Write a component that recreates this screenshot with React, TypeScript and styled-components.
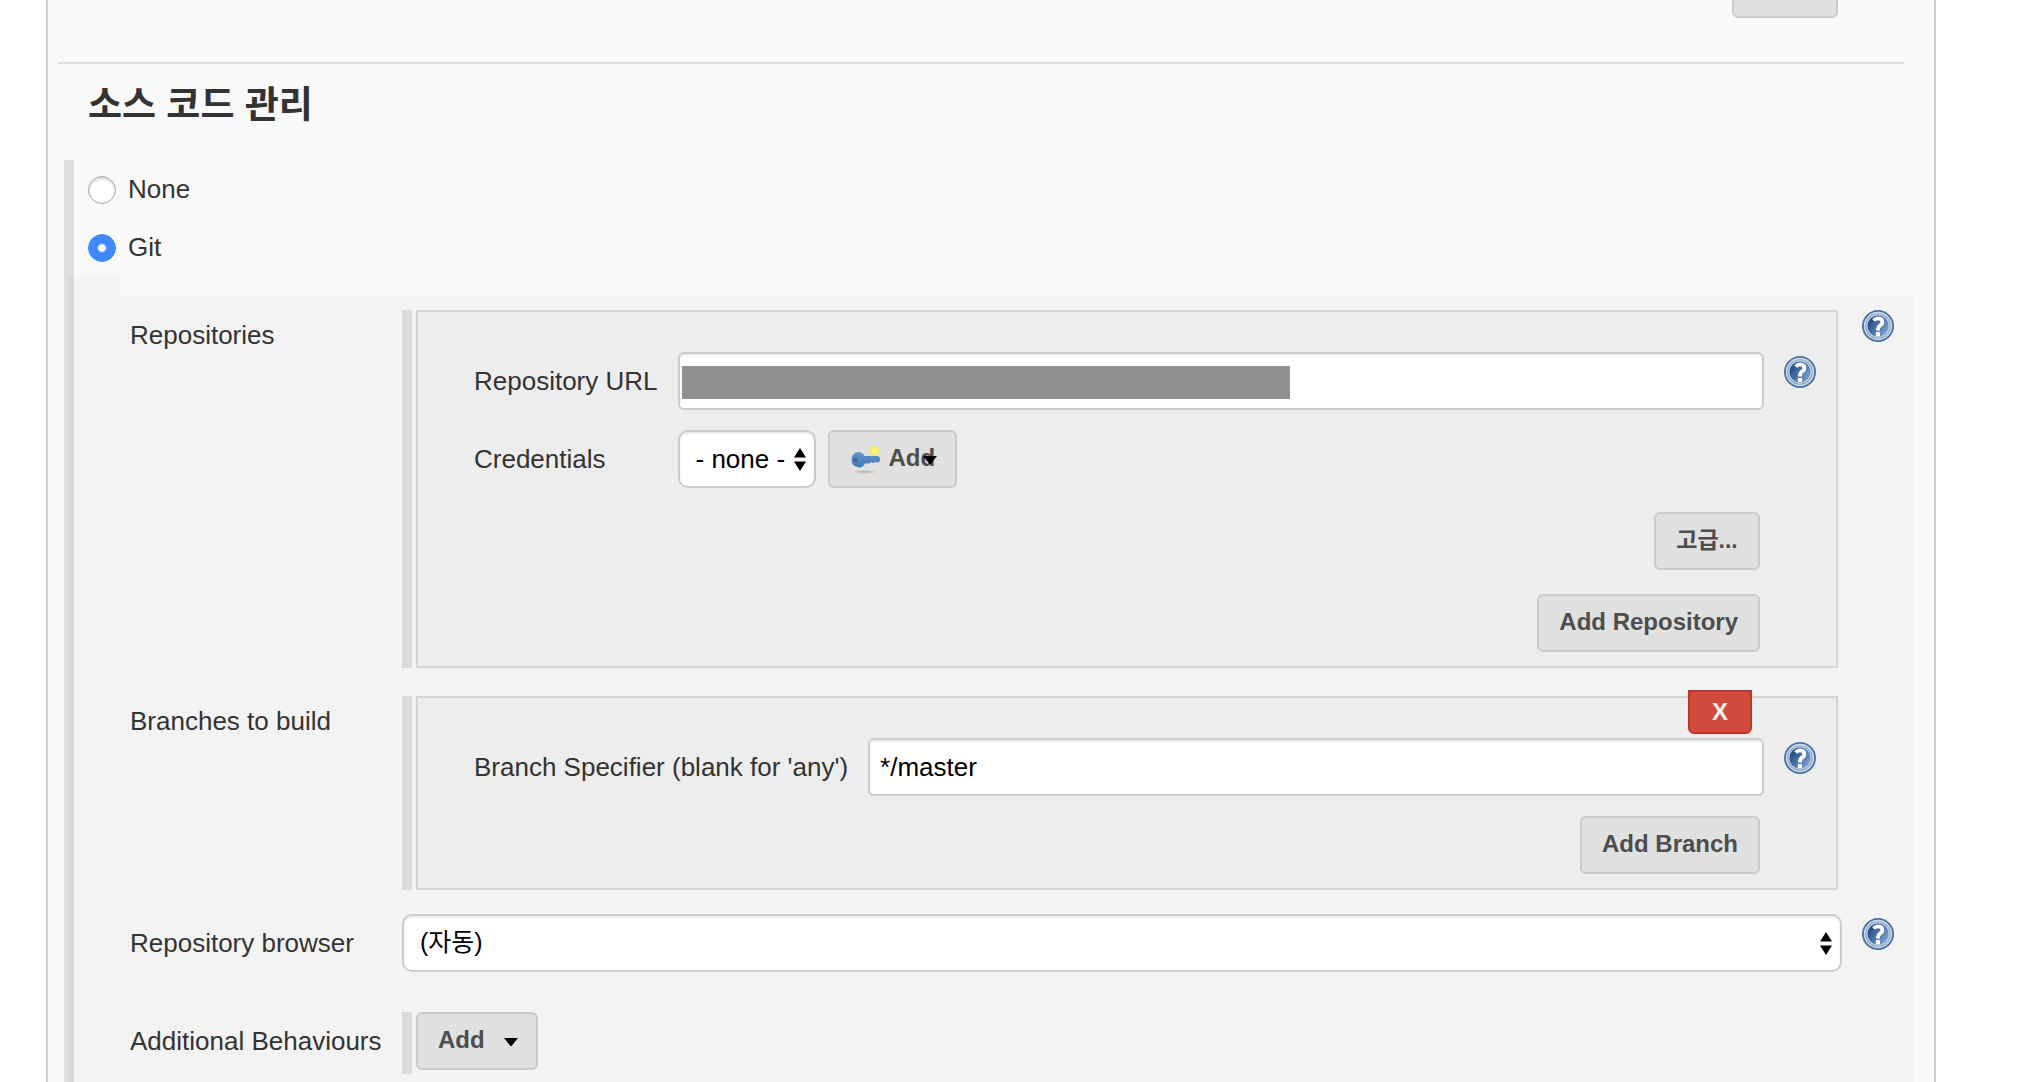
import React, { useId, useState } from "react";
import styled, { createGlobalStyle } from "styled-components";

const GlobalStyle = createGlobalStyle`
  *, *::before, *::after { box-sizing: border-box; }
  body {
    margin: 0;
    background: #fff;
    color: #333;
    font: 26px/30px "Liberation Sans", "Noto Sans CJK KR", sans-serif;
  }
  button, input, select { font-family: inherit; margin: 0; }
`;

const Page = styled.div`
  display: flex;
  flex-direction: column;
  min-height: 100vh;
  padding: 0 84px 0 46px;
`;

const Panel = styled.main`
  flex: 1;
  display: flex;
  flex-direction: column;
  background: #f9f9f9;
  border: solid #ccc;
  border-width: 0 2px;
`;

const PreviousRow = styled.div`
  display: flex;
  justify-content: flex-end;
  align-items: flex-end;
  height: 18px;
  padding-right: 96px;
  overflow: hidden;
`;

const Divider = styled.hr`
  width: auto;
  height: 2px;
  margin: 44px 30px 0 10px;
  border: 0;
  background: #dedede;
`;

const Heading = styled.h1`
  margin: 0 0 16px;
  padding: 4px 0 0 40px;
  font-size: 37px;
  line-height: 76px;
  font-weight: 700;
`;

const ScmChoices = styled.section`
  flex: 1;
  display: flex;
  flex-direction: column;
  margin: 0 20px 0 16px;
  border-left: 10px solid rgba(0, 0, 0, 0.1);
`;

const RadioRow = styled.label`
  display: flex;
  align-items: center;
  gap: 12px;
  height: 58px;
  padding: 2px 0 0 14px;

  span { padding-bottom: 2px; }
`;

const Radio = styled.input`
  appearance: none;
  width: 28px;
  height: 28px;
  margin: 0;
  border-radius: 50%;
  border: 1px solid #a9a9a9;
  background: #fff;
  box-shadow: inset 0 2px 3px rgba(0, 0, 0, 0.18);

  &:checked {
    border-color: #3f8afa;
    background: radial-gradient(circle, #fff 0 3px, #3f8afa 5px);
    box-shadow: none;
  }
`;

const GitTab = styled.div`
  width: 52px;
  height: 20px;
  margin-left: -6px;
  background: rgba(0, 0, 0, 0.025);
`;

const GitSettings = styled.div`
  flex: 1;
  margin-left: -6px;
  padding: 14px 20px 8px 62px;
  background: rgba(0, 0, 0, 0.025);
`;

const SettingRow = styled.div<{ $gap?: number }>`
  display: grid;
  grid-template-columns: 272px minmax(0, 1fr) 32px;
  align-items: start;
  margin-top: ${(p) => p.$gap ?? 0}px;
`;

const SettingLabel = styled.label<{ $inline?: boolean }>`
  padding-top: ${(p) => (p.$inline ? 14 : 10)}px;
  white-space: nowrap;
`;

const SettingContent = styled.div`
  margin-right: 20px;
`;

const Repeatable = styled.div`
  display: flex;
  gap: 4px;
  padding-right: 4px;

  &::before {
    content: "";
    flex: none;
    width: 10px;
    background: rgba(0, 0, 0, 0.1);
  }
`;

const Box = styled.div`
  position: relative;
  flex: 1;
  min-width: 0;
  padding: 40px 20px 14px 56px;
  border: 2px solid #d4d4d4;
  background: rgba(0, 0, 0, 0.025);
`;

const Fields = styled.div`
  display: grid;
  grid-template-columns: auto minmax(0, 1fr) 32px;
  gap: 20px;
  align-items: center;
`;

const FieldLabel = styled.label`
  white-space: nowrap;
`;

const Actions = styled.div<{ $gap: number }>`
  display: flex;
  flex-direction: column;
  align-items: flex-end;
  gap: 24px;
  margin-top: ${(p) => p.$gap}px;
  padding-right: 56px;
`;

const FieldBox = styled.div`
  position: relative;
`;

const TextInput = styled.input`
  display: block;
  width: 100%;
  height: 58px;
  padding: 0 10px;
  border: 2px solid #ccc;
  border-radius: 6px;
  background: #fff;
  box-shadow: inset 0 2px 2px rgba(0, 0, 0, 0.075);
  color: #000;
  font-size: 26px;
`;

const Redaction = styled.div`
  position: absolute;
  top: 14px;
  left: 4px;
  width: 56%;
  height: 33px;
  background: #909090;
`;

const SelectBox = styled.div`
  position: relative;

  svg {
    position: absolute;
    top: 18px;
    right: 10px;
    pointer-events: none;
  }
`;

const SelectInput = styled.select<{ $wide?: boolean }>`
  appearance: none;
  display: block;
  width: ${(p) => (p.$wide ? "100%" : "auto")};
  height: 58px;
  padding: 0 28px ${(p) => (p.$wide ? 2 : 0)}px 16px;
  border: 2px solid #ccc;
  border-radius: 10px;
  background: #fff;
  box-shadow: inset 0 2px 2px rgba(0, 0, 0, 0.075);
  color: #000;
  font-size: ${(p) => (p.$wide ? 25 : 26)}px;
`;

const Inline = styled.div`
  display: flex;
  gap: 12px;
`;

const Button = styled.button`
  height: 58px;
  min-width: 106px;
  padding: 0 20px 2px;
  border: 2px solid #cacaca;
  border-radius: 6px;
  background: #e0e0e0;
  color: #4d4d4d;
  font-size: 24px;
  font-weight: 700;
  line-height: 28px;
  white-space: nowrap;

  &:lang(ko) { font-size: 23px; }
`;

const MenuButton = styled(Button)<{ $icon?: boolean }>`
  position: relative;
  display: flex;
  align-items: center;
  gap: 7px;
  padding-right: ${(p) => (p.$icon ? 20 : 51)}px;
`;

const Caret = styled.svg`
  position: absolute;
  top: 24px;
  right: 18px;
`;

const KeyImage = styled.svg`
  flex: none;
`;

const AddBehaviour = styled.div`
  padding-bottom: 4px;
`;

const DeleteButton = styled.button`
  position: absolute;
  top: -8px;
  right: 84px;
  width: 64px;
  height: 44px;
  padding: 0;
  border: 2px solid #bd362b;
  border-radius: 0 0 6px 6px;
  background: #d24a3c;
  color: #f2f2f2;
  font-size: 24px;
  font-weight: 700;
  line-height: 28px;
`;

const HelpButton = styled.button<{ $drop?: boolean }>`
  align-self: start;
  width: 32px;
  height: 32px;
  margin-top: ${(p) => (p.$drop ? 4 : 0)}px;
  padding: 0;
  border: 0;
  background: none;

  svg { display: block; }
`;

function Help({ topic, drop }: { topic: string; drop?: boolean }) {
  const id = useId();
  return (
    <HelpButton type="button" aria-label={`Help: ${topic}`} $drop={drop}>
      <svg width="32" height="32" viewBox="0 0 32 32">
        <defs>
          <linearGradient id={id} x1="0" y1="0.2" x2="1" y2="0.9">
            <stop offset="0.1" stopColor="#234c8a" />
            <stop offset="1" stopColor="#86abd4" />
          </linearGradient>
        </defs>
        <circle cx="16" cy="16" r="16" fill="#4a6fa6" />
        <circle cx="16" cy="16" r="13.4" fill="#7391bd" stroke="#ccd8e8" strokeWidth="1.6" />
        <circle cx="16" cy="16" r="11.2" fill={`url(#${id})`} stroke="#b9cae0" strokeWidth="1.4" />
        <path
          d="M11.8 10.6 Q13.4 8.4 16.2 8.4 Q20.4 8.6 20.4 12 Q20.4 14 18 15.600 Q15.900 17.200 15.900 20.400"
          fill="none"
          stroke="#fff"
          strokeWidth="3.8"
        />
        <rect x="13.800" y="22" width="4.200" height="4.200" rx="1" fill="#fff" />
      </svg>
    </HelpButton>
  );
}

function SelectArrows() {
  return (
    <svg width="12" height="24" viewBox="0 0 12 24" aria-hidden="true">
      <path d="M6 0 L12 9.500 H0Z M0 13.500 H12 L6 23Z" fill="#000" />
    </svg>
  );
}

function DownCaret() {
  return (
    <Caret width="14" height="8" viewBox="0 0 14 8" aria-hidden="true">
      <path d="M0 0 H14 L7.6 8 H6.4Z" fill="#000" />
    </Caret>
  );
}

function KeyIcon() {
  return (
    <KeyImage width="32" height="32" viewBox="0 0 32 32" aria-hidden="true">
      <defs>
        <radialGradient id="glow">
          <stop offset="0" stopColor="#fffa9a" />
          <stop offset="0.6" stopColor="#f7ee5c" />
          <stop offset="1" stopColor="#f3ea60" stopOpacity="0" />
        </radialGradient>
        <radialGradient id="keyShadow">
          <stop offset="0" stopColor="#000" stopOpacity="0.22" />
          <stop offset="1" stopColor="#000" stopOpacity="0" />
        </radialGradient>
        <linearGradient id="keyBody" x1="0" y1="0" x2="0" y2="1">
          <stop offset="0" stopColor="#6497ce" />
          <stop offset="1" stopColor="#4377b4" />
        </linearGradient>
      </defs>
      <ellipse cx="15" cy="29.800" rx="13" ry="2.200" fill="url(#keyShadow)" />
      <circle cx="24.500" cy="9" r="6" fill="url(#glow)" />
      <path
        d="M8.500 10 Q12.500 10 14.500 14 H28 Q30 14.500 30 16.500 V18.500 Q29.500 20.500 27.500 20.500 L25.500 19.800 L23.500 21.300 L21.500 20 L19 21.500 H15 Q13 25.500 9 25.500 Q1.500 24.500 1.500 17.800 Q1.500 11 8.500 10Z"
        fill="url(#keyBody)"
      />
      <ellipse cx="5.500" cy="17.800" rx="2" ry="2.600" fill="#44658e" />
    </KeyImage>
  );
}

export default function App() {
  const [scm, setScm] = useState("git");
  const [branch, setBranch] = useState("*/master");
  return (
    <>
      <GlobalStyle />
      <Page>
        <Panel>
          <PreviousRow>
            <Button type="button" aria-label="고급" />
          </PreviousRow>
          <Divider />
          <Heading lang="ko">소스 코드 관리</Heading>
          <ScmChoices>
            <RadioRow>
              <Radio type="radio" name="scm" checked={scm === "none"} onChange={() => setScm("none")} />
              <span>None</span>
            </RadioRow>
            <RadioRow>
              <Radio type="radio" name="scm" checked={scm === "git"} onChange={() => setScm("git")} />
              <span>Git</span>
            </RadioRow>
            <GitTab />
            <GitSettings>
              <SettingRow>
                <SettingLabel as="div">Repositories</SettingLabel>
                <SettingContent>
                  <Repeatable>
                    <Box>
                      <Fields>
                        <FieldLabel htmlFor="repo-url">Repository URL</FieldLabel>
                        <FieldBox>
                          <TextInput id="repo-url" type="text" />
                          <Redaction />
                        </FieldBox>
                        <Help topic="Repository URL" drop />
                        <FieldLabel htmlFor="credentials">Credentials</FieldLabel>
                        <Inline>
                          <SelectBox>
                            <SelectInput id="credentials">
                              <option>- none -</option>
                            </SelectInput>
                            <SelectArrows />
                          </SelectBox>
                          <MenuButton type="button" $icon>
                            <KeyIcon />
                            Add
                            <DownCaret />
                          </MenuButton>
                        </Inline>
                      </Fields>
                      <Actions $gap={24}>
                        <Button type="button" lang="ko">고급...</Button>
                        <Button type="button">Add Repository</Button>
                      </Actions>
                    </Box>
                  </Repeatable>
                </SettingContent>
                <Help topic="Repositories" />
              </SettingRow>

              <SettingRow $gap={28}>
                <SettingLabel as="div">Branches to build</SettingLabel>
                <SettingContent>
                  <Repeatable>
                    <Box>
                      <DeleteButton type="button">X</DeleteButton>
                      <Fields>
                        <FieldLabel htmlFor="branch">Branch Specifier (blank for 'any')</FieldLabel>
                        <TextInput
                          id="branch"
                          type="text"
                          value={branch}
                          onChange={(e) => setBranch(e.target.value)}
                        />
                        <Help topic="Branch Specifier" drop />
                      </Fields>
                      <Actions $gap={20}>
                        <Button type="button">Add Branch</Button>
                      </Actions>
                    </Box>
                  </Repeatable>
                </SettingContent>
              </SettingRow>

              <SettingRow $gap={24}>
                <SettingLabel htmlFor="browser" $inline>Repository browser</SettingLabel>
                <SettingContent>
                  <SelectBox>
                    <SelectInput id="browser" $wide>
                      <option>(자동)</option>
                    </SelectInput>
                    <SelectArrows />
                  </SelectBox>
                </SettingContent>
                <Help topic="Repository browser" drop />
              </SettingRow>

              <SettingRow $gap={40}>
                <SettingLabel as="div" $inline>Additional Behaviours</SettingLabel>
                <SettingContent>
                  <Repeatable>
                    <AddBehaviour>
                      <MenuButton type="button">
                        Add
                        <DownCaret />
                      </MenuButton>
                    </AddBehaviour>
                  </Repeatable>
                </SettingContent>
              </SettingRow>
            </GitSettings>
          </ScmChoices>
        </Panel>
      </Page>
    </>
  );
}
